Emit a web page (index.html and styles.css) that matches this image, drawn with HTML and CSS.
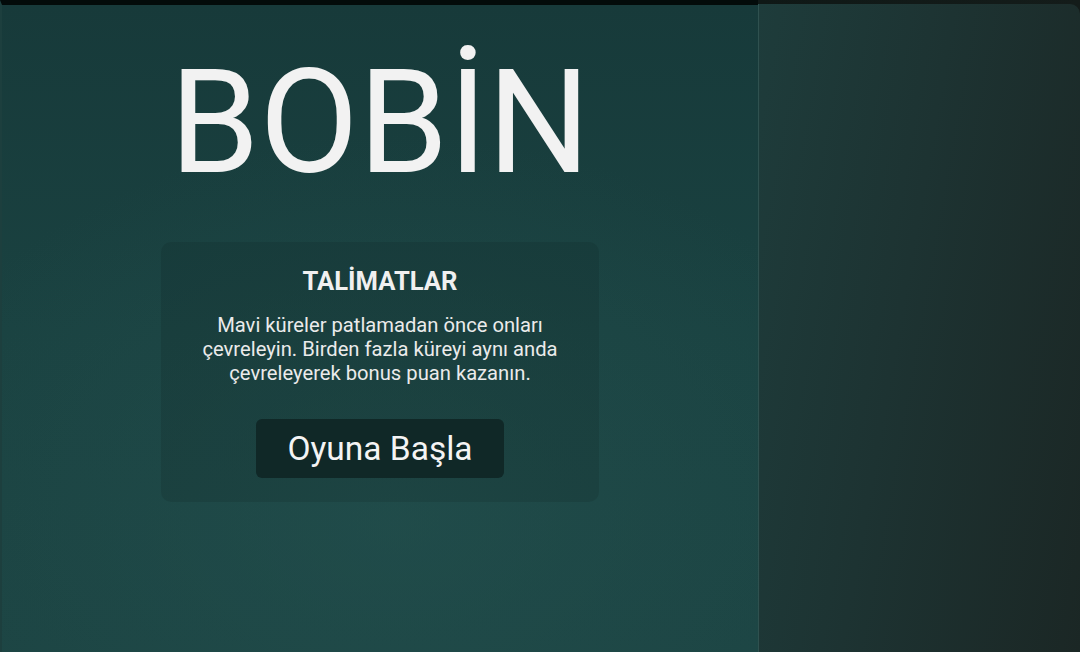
FILE: index.html
```html
<!DOCTYPE html>
<html lang="tr">
<head>
<meta charset="utf-8">
<title>BOBİN</title>
<link rel="stylesheet" href="styles.css">
</head>
<body>
<div class="screen">
  <main class="game">
    <h1 class="logo">BOBİN</h1>
    <section class="card">
      <h2 class="card-title">TALİMATLAR</h2>
      <p class="card-text">Mavi küreler patlamadan önce onları çevreleyin. Birden fazla küreyi aynı anda çevreleyerek bonus puan kazanın.</p>
      <button class="start">Oyuna Başla</button>
    </section>
  </main>
  <aside class="side">
    <div class="side-panel"></div>
  </aside>
</div>
</body>
</html>
```
FILE: styles.css
```css
html, body {
  margin: 0;
  padding: 0;
  height: 100%;
}
body {
  background: #0c1514;
  font-family: Roboto, "Liberation Sans", sans-serif;
  overflow: hidden;
}
.screen {
  display: flex;
  height: 652px;
}
.game {
  width: 758px;
  flex: none;
  border-top: 5px solid #030b0a;
  border-left: 2px solid #1d3f3e;
  background:
    radial-gradient(ellipse 70% 60% at 52% 80%, rgba(36, 82, 80, 0.55) 0%, rgba(36, 82, 80, 0) 100%),
    linear-gradient(180deg, #173a3a 0%, #1a4241 50%, #1c4443 100%);
  display: flex;
  flex-direction: column;
  align-items: center;
  box-sizing: border-box;
  padding-top: 46px;
}
.logo {
  margin: 0;
  font-family: Roboto, "Liberation Sans", sans-serif;
  font-weight: 400;
  font-size: 144px;
  line-height: 144px;
  color: #f2f2f2;
}
.card {
  margin-top: 47px;
  width: 438px;
  box-sizing: border-box;
  padding: 24px 34px 24px;
  background: rgba(0, 0, 0, 0.09);
  border-radius: 10px;
  display: flex;
  flex-direction: column;
  align-items: center;
  text-align: center;
}
.card-title {
  margin: 0;
  font-size: 25.6px;
  line-height: 30px;
  font-weight: 700;
  color: #f0f0f0;
}
.card-text {
  margin: 17px 0 0;
  font-size: 20.2px;
  line-height: 24px;
  color: #ebebeb;
}
.start {
  margin-top: 34px;
  height: 59px;
  padding: 0 31px;
  border: none;
  border-radius: 6px;
  background: #102827;
  color: #f4f4f4;
  font-family: Roboto, "Liberation Sans", sans-serif;
  font-size: 33.5px;
  line-height: 59px;
}
.side {
  flex: 1;
  background: linear-gradient(90deg, #0f1816 0%, #141c1a 100%);
  padding-top: 4px;
  display: flex;
}
.side-panel {
  flex: 1;
  border-left: 1px solid #2f514f;
  border-top-right-radius: 10px;
  background: linear-gradient(100deg, #1e3c3b 0%, #1d3332 45%, #1b2725 100%);
}
```
